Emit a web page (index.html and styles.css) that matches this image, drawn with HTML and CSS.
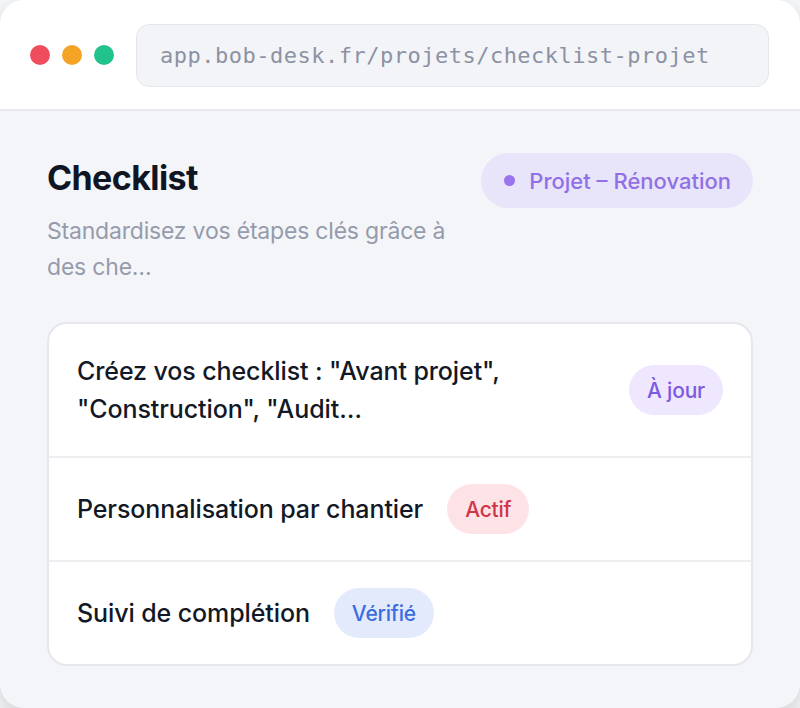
FILE: index.html
```html
<!DOCTYPE html>
<html lang="fr">
<head>
<meta charset="utf-8">
<title>Checklist</title>
<link rel="stylesheet" href="styles.css">
</head>
<body>
<div class="window">
  <header class="titlebar">
    <div class="dots">
      <span class="dot red"></span>
      <span class="dot orange"></span>
      <span class="dot green"></span>
    </div>
    <div class="urlbar">app.bob-desk.fr/projets/checklist-projet</div>
  </header>
  <main class="content">
    <div class="head">
      <div class="head-text">
        <h1 class="title">Checklist</h1>
        <p class="subtitle">Standardisez vos étapes clés grâce à des che…</p>
      </div>
      <div class="pill"><span class="pill-dot"></span>Projet – Rénovation</div>
    </div>
    <section class="card">
      <div class="row">
        <div class="row-text">Créez vos checklist : "Avant projet", "Construction", "Audit…</div>
        <span class="badge violet">À jour</span>
      </div>
      <div class="row">
        <div class="row-text">Personnalisation par chantier</div>
        <span class="badge red">Actif</span>
      </div>
      <div class="row">
        <div class="row-text">Suivi de complétion</div>
        <span class="badge blue">Vérifié</span>
      </div>
    </section>
  </main>
</div>
</body>
</html>
```
FILE: styles.css
```css
* { box-sizing: border-box; }
html, body { margin: 0; padding: 0; }
body {
  background: #f8f9fb;
  font-family: Inter, "Noto Sans", sans-serif;
  width: 800px;
  height: 708px;
  overflow: hidden;
}
.window {
  width: 800px;
  height: 708px;
  border-radius: 24px;
  overflow: hidden;
  background: #f4f5f9;
  box-shadow: 0 8px 24px rgba(0,0,0,0.18);
  display: flex;
  flex-direction: column;
}
.titlebar {
  height: 111px;
  background: #ffffff;
  border-bottom: 2px solid #e7e8ed;
  display: flex;
  align-items: center;
  padding: 0 31px 0 30px;
  gap: 22px;
  flex-shrink: 0;
}
.dots { display: flex; gap: 12px; }
.dot { width: 20px; height: 20px; border-radius: 50%; display: block; }
.dot.red { background: #ef4c5d; }
.dot.orange { background: #f4a324; }
.dot.green { background: #22c28c; }
.urlbar {
  flex: 1;
  height: 63px;
  margin-top: 1px;
  background: #f3f4f8;
  border: 1.5px solid #e4e6ec;
  border-radius: 13px;
  display: flex;
  align-items: center;
  padding-left: 23px;
  font-family: "DejaVu Sans Mono", "Liberation Mono", monospace;
  font-size: 22px;
  letter-spacing: 0.5px;
  color: #8c92a3;
}
.content {
  flex: 1;
  padding: 41px 47px 0 47px;
}
.head {
  display: flex;
  justify-content: space-between;
  align-items: flex-start;
}
.head-text { width: 420px; }
.title {
  margin: 0;
  font-size: 34px;
  line-height: 52px;
  font-weight: 700;
  letter-spacing: -0.6px;
  color: #0f1523;
}
.subtitle {
  margin: 9px 0 0 0;
  font-size: 23px;
  line-height: 36px;
  color: #959bab;
  font-weight: 400;
  letter-spacing: -0.2px;
}
.pill {
  margin-top: 1px;
  height: 55px;
  border-radius: 28px;
  background: #e8e4fa;
  color: #9170e6;
  font-size: 22px;
  font-weight: 500;
  display: flex;
  align-items: center;
  padding: 0 22px 0 23px;
  gap: 14px;
}
.pill-dot {
  width: 11px; height: 11px; border-radius: 50%;
  background: #9a74ee;
}
.card {
  margin-top: 37px;
  background: #ffffff;
  border: 2px solid #e6e7ec;
  border-radius: 20px;
  overflow: hidden;
}
.row {
  display: flex;
  align-items: center;
  gap: 24px;
  padding: 0 28px;
  border-bottom: 2px solid #eceef2;
}
.row:last-child { border-bottom: none; }
.row:nth-child(1) { height: 134px; justify-content: space-between; }
.row:nth-child(2) { height: 104px; }
.row:nth-child(3) { height: 102px; }
.row-text {
  font-size: 25px;
  line-height: 38px;
  font-weight: 500;
  color: #121826;
  letter-spacing: -0.1px;
}
.badge {
  flex-shrink: 0;
  height: 50px;
  border-radius: 25px;
  padding: 0 18px;
  display: flex;
  align-items: center;
  font-size: 21px;
  font-weight: 500;
  letter-spacing: -0.2px;
}
.badge.violet { background: #eee7fd; color: #7b5ae3; }
.badge.red { background: #fde3e6; color: #cf3546; }
.badge.blue { background: #e3eafc; color: #3a6ddf; }
```
